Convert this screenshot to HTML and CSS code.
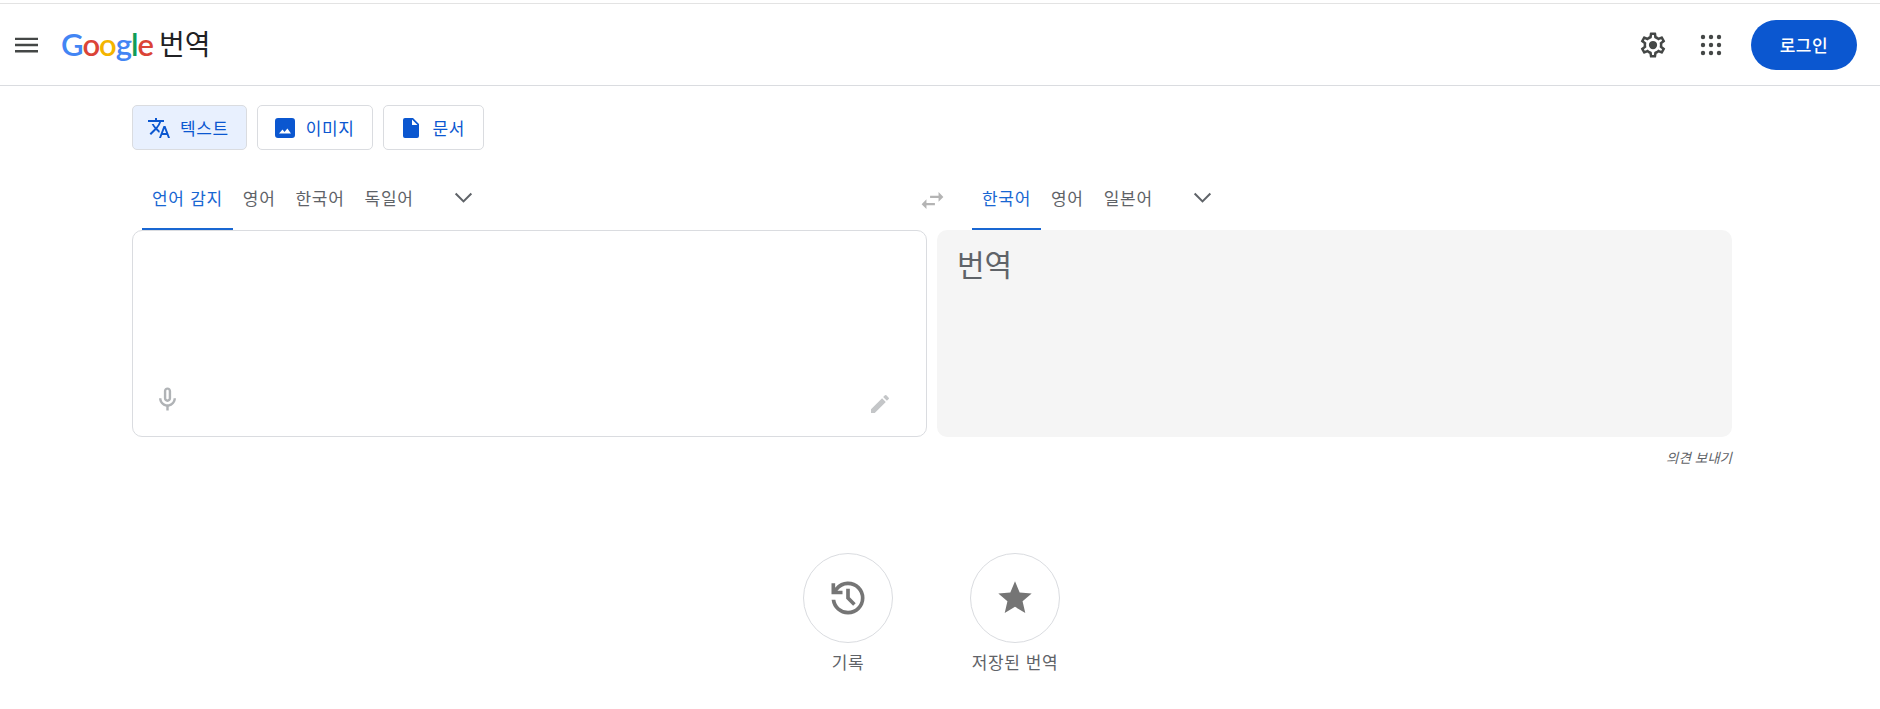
FILE: index.html
```html
<!DOCTYPE html>
<html lang="ko">
<head>
<meta charset="utf-8">
<title>Google 번역</title>
<link rel="stylesheet" href="styles.css">
</head>
<body>
<header class="topbar">
  <div class="brand">
    <svg class="menu-icon" viewBox="0 0 23 24" width="23" height="24"><path d="M0 4.700h23v2.400H0zM0 10.800h23v2.400H0zM0 17h23v2.400H0z"/></svg>
    <span class="logo"><span class="g-blue">G</span><span class="g-red">o</span><span class="g-yellow">o</span><span class="g-blue">g</span><span class="g-green">l</span><span class="g-red">e</span></span>
    <span class="product">번역</span>
  </div>
  <div class="actions">
    <svg class="gear" viewBox="0 0 24 24" width="30" height="30"><path d="M19.43 12.98c.04-.32.07-.64.07-.98s-.03-.66-.07-.98l2.110-1.650c.19-.15.24-.42.12-.64l-2-3.460c-.12-.22-.39-.3-.61-.22l-2.490 1c-.52-.4-1.080-.73-1.690-.98l-.38-2.650A.49.49 0 0 0 14 2h-4c-.25 0-.46.18-.49.42l-.38 2.650c-.61.25-1.170.59-1.690.98l-2.490-1c-.23-.09-.49 0-.61.22l-2 3.460c-.13.22-.07.49.12.64l2.110 1.650c-.04.32-.07.65-.07.98s.03.66.07.98l-2.110 1.650c-.19.15-.24.42-.12.64l2 3.460c.12.22.39.3.61.22l2.490-1c.52.4 1.080.73 1.690.98l.38 2.650c.03.24.24.42.49.42h4c.25 0 .46-.18.49-.42l.38-2.650c.61-.25 1.170-.59 1.690-.98l2.490 1c.23.09.49 0 .61-.22l2-3.460c.12-.22.07-.49-.12-.64l-2.110-1.650zm-1.980-1.710c.04.31.05.52.05.73 0 .21-.02.43-.05.73l-.14 1.130.89.7 1.080.84-.7 1.210-1.270-.51-1.040-.42-.9.68c-.43.32-.84.56-1.250.73l-1.060.43-.16 1.130-.2 1.350h-1.400l-.19-1.350-.16-1.130-1.060-.43c-.43-.18-.83-.41-1.230-.71l-.91-.7-1.060.43-1.270.51-.7-1.210 1.080-.84.89-.7-.14-1.130c-.03-.31-.05-.54-.05-.74s.02-.43.05-.73l.14-1.130-.89-.7-1.080-.84.7-1.210 1.270.51 1.040.42.9-.68c.43-.32.84-.56 1.250-.73l1.060-.43.16-1.130.2-1.350h1.390l.19 1.350.16 1.130 1.060.43c.43.18.83.41 1.230.71l.91.7 1.060-.43 1.270-.51.7 1.210-1.070.85-.89.7.14 1.130z"/><circle cx="12" cy="12" r="3.300"/></svg>
    <svg class="apps" viewBox="0 0 22 22" width="22" height="22"><circle cx="3" cy="3" r="2.200"/><circle cx="11" cy="3" r="2.200"/><circle cx="19" cy="3" r="2.200"/><circle cx="3" cy="11" r="2.200"/><circle cx="11" cy="11" r="2.200"/><circle cx="19" cy="11" r="2.200"/><circle cx="3" cy="19" r="2.200"/><circle cx="11" cy="19" r="2.200"/><circle cx="19" cy="19" r="2.200"/></svg>
    <button class="login">로그인</button>
  </div>
</header>

<main class="content">
  <nav class="modes">
    <button class="mode mode-active">
      <svg viewBox="0 0 24 24" width="24" height="24"><path d="M12.870 15.070l-2.540-2.510.03-.03A17.520 17.520 0 0 0 14.070 6H17V4h-7V2H8v2H1v2h11.170C11.500 7.920 10.440 9.750 9 11.350 8.070 10.320 7.300 9.190 6.690 8h-2c.73 1.630 1.730 3.170 2.980 4.560l-5.090 5.020L4 19l5-5 3.110 3.110.76-2.040zM18.500 10h-2L12 22h2l1.120-3h4.750L21 22h2l-4.500-12zm-2.620 7l1.620-4.330L19.120 17h-3.240z"/></svg>
      <span>텍스트</span>
    </button>
    <button class="mode">
      <svg viewBox="0 0 24 24" width="24" height="24"><path d="M5 2h14a3 3 0 0 1 3 3v14a3 3 0 0 1-3 3H5a3 3 0 0 1-3-3V5a3 3 0 0 1 3-3zm1 15.500h12l-3.600-5-2.900 3.600-2-2.500L6 17.500z"/></svg>
      <span>이미지</span>
    </button>
    <button class="mode">
      <svg viewBox="0 0 24 24" width="24" height="24"><path d="M6 2h8l6 6v12a2 2 0 0 1-2 2H6a2 2 0 0 1-2-2V4a2 2 0 0 1 2-2zm7 1.500V9h5.500L13 3.500z"/></svg>
      <span>문서</span>
    </button>
  </nav>

  <section class="translator">
    <div class="side">
      <div class="langs">
        <span class="lang lang-active">언어 감지</span>
        <span class="lang">영어</span>
        <span class="lang">한국어</span>
        <span class="lang">독일어</span>
        <svg class="chev" viewBox="0 0 24 24" width="27" height="27"><path d="M5 8.500l7 7 7-7"/></svg>
      </div>
      <div class="panel panel-src">
        <svg class="mic" viewBox="0 0 24 24" width="29" height="29"><path fill-rule="evenodd" d="M12 14c1.660 0 3-1.340 3-3V5c0-1.660-1.340-3-3-3S9 3.340 9 5v6c0 1.660 1.340 3 3 3zM11 5c0-.55.45-1 1-1s1 .45 1 1v6c0 .55-.45 1-1 1s-1-.45-1-1V5z"/><path d="M17 11c0 2.760-2.240 5-5 5s-5-2.240-5-5H5c0 3.530 2.610 6.430 6 6.920V21h2v-3.080c3.390-.49 6-3.390 6-6.920h-2z"/></svg>
        <svg class="pen" viewBox="0 0 24 24" width="24" height="24"><path d="M3 17.250V21h3.750L17.810 9.940l-3.750-3.750L3 17.250zM20.710 7.040a1 1 0 0 0 0-1.410l-2.340-2.340a1 1 0 0 0-1.410 0l-1.830 1.830 3.750 3.750 1.830-1.830z"/></svg>
      </div>
    </div>
    <svg class="swap" viewBox="0 0 24 24" width="29" height="29"><path d="M6.990 11L3 15l3.990 4v-3H14v-2H6.990v-3zM21 9l-3.990-4v3H10v2h7.010v3L21 9z"/></svg>
    <div class="side">
      <div class="langs langs-tgt">
        <span class="lang lang-active">한국어</span>
        <span class="lang">영어</span>
        <span class="lang">일본어</span>
        <svg class="chev" viewBox="0 0 24 24" width="27" height="27"><path d="M5 8.500l7 7 7-7"/></svg>
      </div>
      <div class="panel panel-tgt">번역</div>
      <div class="feedback">의견 보내기</div>
    </div>
  </section>

  <section class="shortcuts">
    <div class="shortcut">
      <div class="circle">
        <svg viewBox="0 -960 960 960" width="44" height="44"><path d="M480-120q-138 0-240.500-91.500T122-440h82q14 104 92.500 172T480-200q117 0 198.500-81.500T760-480q0-117-81.500-198.500T480-760q-69 0-129 32t-101 88h110v80H120v-240h80v94q51-64 124.500-101T480-840q75 0 140.500 28.500t114 77q48.500 48.500 77 114T840-480q0 75-28.500 140.500t-77 114q-48.500 48.500-114 77T480-120Zm112-192L440-464v-216h80v184l128 128-56 56Z"/></svg>
      </div>
      <span>기록</span>
    </div>
    <div class="shortcut">
      <div class="circle">
        <svg viewBox="0 0 24 24" width="40" height="40"><path d="M12 17.270L18.180 21l-1.640-7.030L22 9.240l-7.190-.61L12 2 9.190 8.630 2 9.240l5.460 4.730L5.820 21z"/></svg>
      </div>
      <span>저장된 번역</span>
    </div>
  </section>
</main>
</body>
</html>
```
FILE: styles.css
```css
* { box-sizing: border-box; }
html, body { margin: 0; height: 100%; overflow: hidden; }
body {
  background: #fff;
  color: #5f6368;
  font-family: "Noto Sans CJK KR", sans-serif;
  padding-top: 3px;
}
.topbar {
  height: 83px;
  border-top: 1px solid #e3e3e3;
  border-bottom: 1px solid #dadce0;
  display: flex;
  align-items: center;
  justify-content: space-between;
  padding: 0 23px 0 15px;
}
.brand, .actions { display: flex; align-items: center; }
.menu-icon { fill: #444746; margin-right: 23px; }
.logo {
  font-family: Lato, sans-serif;
  font-size: 31px;
  font-weight: 600;
  letter-spacing: -1px;
  line-height: 1;
  margin-right: 6px;
}
.g-blue { color: #4285f4; }
.g-red { color: #db4437; }
.g-yellow { color: #f4b400; }
.g-green { color: #0f9d58; }
.product {
  font-size: 28px;
  color: #202124;
  position: relative;
  top: -2px;
}
.gear { fill: #444746; margin-right: 32px; }
.apps { fill: #444746; margin-right: 29px; }
.login {
  width: 106px;
  height: 50px;
  border: 0;
  border-radius: 25px;
  background: #0b57d0;
  color: #fff;
  font: 500 17px "Noto Sans CJK KR", sans-serif;
  letter-spacing: 0.6px;
}
.content { padding: 0 148px 0 132px; }
.modes { display: flex; gap: 10px; padding-top: 19px; }
.mode {
  height: 45px;
  display: flex;
  align-items: center;
  gap: 9px;
  padding: 0 18px 0 15px;
  background: #fff;
  border: 1px solid #dadce0;
  border-radius: 5px;
  color: #0b57d0;
  font: 400 17px "Noto Sans CJK KR", sans-serif;
  letter-spacing: 0.6px;
}
.mode svg { fill: #0b57d0; }
.mode-active { background: #e8f0fe; padding: 0 17px 0 14px; }
.translator { display: flex; position: relative; gap: 10px; margin-top: 15px; }
.side { flex: 1; display: flex; flex-direction: column; }
.langs {
  height: 65px;
  display: flex;
  align-items: stretch;
  padding-left: 10px;
}
.langs-tgt { padding-left: 35px; }
.lang {
  display: flex;
  align-items: center;
  padding: 2px 10px 0;
  font: 400 17px "Noto Sans CJK KR", sans-serif;
  letter-spacing: 0.700px;
  color: #5f6368;
  border-bottom: 2px solid transparent;
}
.lang-active { color: #1967d2; border-bottom-color: #1967d2; }
.chev {
  fill: none;
  stroke: #5f6368;
  stroke-width: 1.800;
  align-self: center;
  margin-left: 26px;
}
.swap {
  fill: #b4b4b4;
  position: absolute;
  left: 786px;
  top: 21px;
}
.panel { height: 207px; border-radius: 10px; position: relative; }
.panel-src { border: 1px solid #dadce0; }
.panel-tgt {
  background: #f5f5f5;
  padding: 15px 20px;
  font: 400 30px/1.2 "Noto Sans CJK KR", sans-serif;
  color: #5f6368;
}
.mic { position: absolute; left: 20px; bottom: 22px; fill: #b0b3b6; }
.pen { position: absolute; right: 34px; bottom: 20px; fill: #c4c6c8; }
.feedback {
  text-align: right;
  font: italic 400 13.500px "Noto Sans CJK KR", sans-serif;
  margin-top: 10px;
  color: #5f6368;
}
.shortcuts {
  position: absolute;
  top: 553px;
  left: 803px;
  display: flex;
  gap: 77px;
}
.shortcut {
  width: 90px;
  display: flex;
  flex-direction: column;
  align-items: center;
  gap: 6px;
  font: 400 17px "Noto Sans CJK KR", sans-serif;
  letter-spacing: 0.6px;
  color: #5f6368;
  white-space: nowrap;
}
.circle {
  width: 90px;
  height: 90px;
  border: 1px solid #dadce0;
  border-radius: 50%;
  display: flex;
  align-items: center;
  justify-content: center;
}
.circle svg { fill: #757575; }
```
